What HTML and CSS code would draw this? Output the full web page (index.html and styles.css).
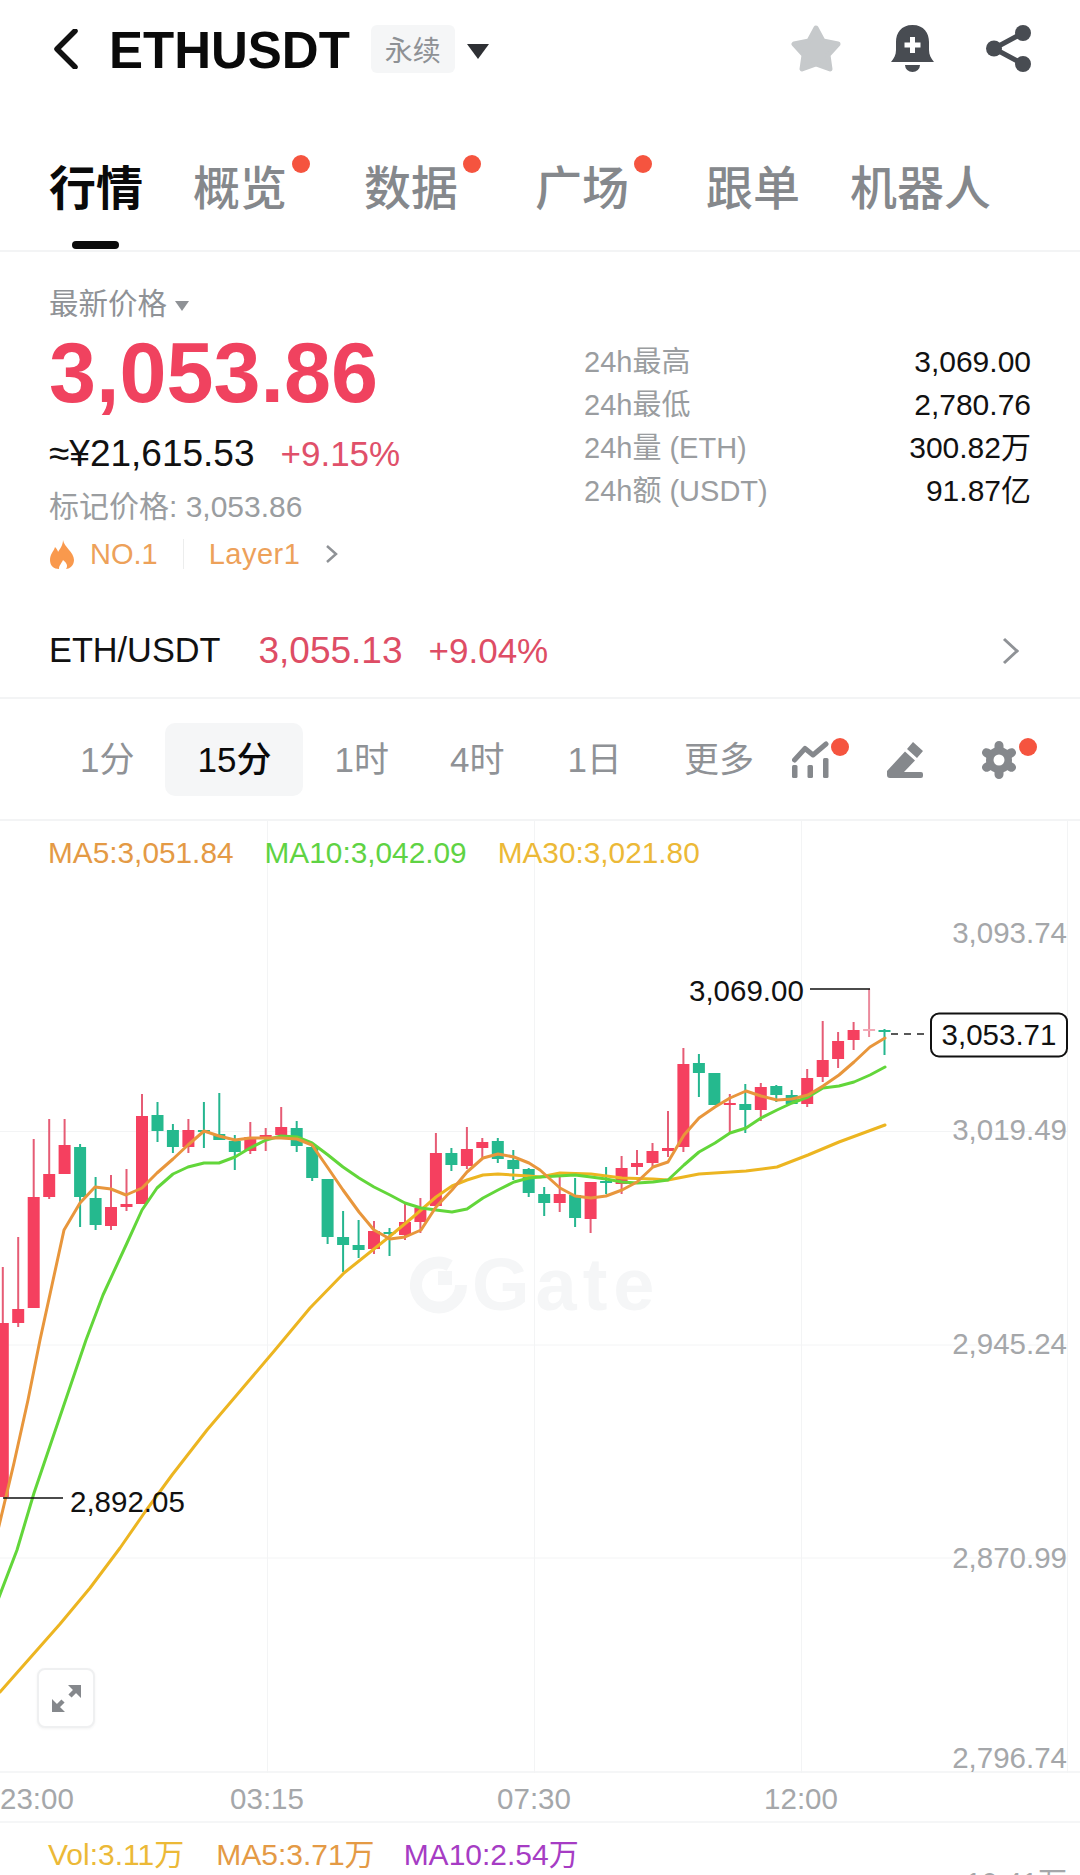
FILE: index.html
```html
<!DOCTYPE html>
<html lang="zh-CN">
<head>
<meta charset="utf-8">
<title>ETHUSDT</title>
<link rel="stylesheet" href="styles.css">
</head>
<body>
<div class="page">
  <header class="topbar">
    <svg class="back" viewBox="0 0 24 40"><polyline points="21,2 3,20 21,38"/></svg>
    <h1 class="symbol">ETHUSDT</h1>
    <span class="badge">永续</span>
    <span class="caret"></span>
    <div class="actions">
      <svg class="ic-star" viewBox="0 0 50 47"><path d="M25 3 32 16 47 19 37 30 39 44 25 39 11 44 13 30 3 19 18 16Z"/></svg>
      <svg class="ic-bell" viewBox="0 0 43 47">
        <path class="fill" d="M21.5 0C10 0 5 8 5 17V25C5 30 3 33 0 37H43C40 33 38 30 38 25V17C38 8 33 0 21.5 0Z"/>
        <path class="fill" d="M14 40H29A7.5 7 0 0 1 14 40Z"/>
        <path class="plus" d="M19 12h5v5.500h5.500v5h-5.500v5.500h-5v-5.500h-5.500v-5h5.500z"/>
      </svg>
      <svg class="ic-share" viewBox="0 0 45 47">
        <path class="link" d="M37 8 8 23.500 37 39"/>
        <circle cx="37" cy="8" r="8"/><circle cx="8" cy="23.500" r="8"/><circle cx="37" cy="39" r="8"/>
      </svg>
    </div>
  </header>

  <nav class="tabs">
    <a class="tab active">行情</a>
    <a class="tab dotted">概览<i class="dot"></i></a>
    <a class="tab dotted">数据<i class="dot"></i></a>
    <a class="tab dotted">广场<i class="dot"></i></a>
    <a class="tab">跟单</a>
    <a class="tab">机器人</a>
  </nav>

  <section class="stats">
    <div class="stats-left">
      <div class="latest">最新价格<span class="mini-caret"></span></div>
      <div class="price">3,053.86</div>
      <div class="fiat"><span class="cny">≈¥21,615.53</span><span class="chg">+9.15%</span></div>
      <div class="mark">标记价格: 3,053.86</div>
      <div class="tags">
        <svg class="flame" viewBox="0 0 24 29"><path d="M13 0C14 7 24 12 24 20 24 26 19 29 16 29 18 26 17 23 13 20 12 23 9 25 9 29 4 29 0 26 0 20 0 14 4 11 5 7 7 9 8 11 8 12 10 9 13 5 13 0Z"/></svg>
        <span class="tag">NO.1</span>
        <span class="tag-sep"></span>
        <span class="tag tag-wide">Layer1</span>
        <svg class="tag-chev" viewBox="0 0 13 20"><polyline points="2,2 11,10 2,18"/></svg>
      </div>
    </div>
    <dl class="stats-right">
      <div class="row"><dt>24h最高</dt><dd>3,069.00</dd></div>
      <div class="row"><dt>24h最低</dt><dd>2,780.76</dd></div>
      <div class="row"><dt>24h量 (ETH)</dt><dd>300.82万</dd></div>
      <div class="row"><dt>24h额 (USDT)</dt><dd>91.87亿</dd></div>
    </dl>
  </section>

  <section class="pair">
    <span class="pair-name">ETH/USDT</span>
    <span class="pair-price">3,055.13</span>
    <span class="pair-chg">+9.04%</span>
    <svg class="pair-chev" viewBox="0 0 17 28"><polyline points="2,2 15,14 2,26"/></svg>
  </section>

  <section class="intervals">
    <span class="iv">1分</span>
    <span class="iv on">15分</span>
    <span class="iv">1时</span>
    <span class="iv">4时</span>
    <span class="iv">1日</span>
    <span class="iv">更多</span>
    <span class="tool">
      <svg class="ic-ind" viewBox="0 0 37 37">
        <path class="ind-line" d="M2.500 19 13 7.500 21 14 34 3"/>
        <rect x="0" y="24" width="5.500" height="13" rx="1.500"/><rect x="15.500" y="24" width="5.500" height="13" rx="1.500"/><rect x="31" y="17" width="5.500" height="20" rx="1.500"/>
      </svg>
      <i class="dot tool-dot"></i>
    </span>
    <span class="tool">
      <svg class="ic-pen" viewBox="0 0 36 36"><path d="M26 0 36 9 30 16 20 7ZM18 9.500 28 18.500 17 30H34Q36 30 36 32V34Q36 36 34 36H3Q0 36 0 33V29Z"/></svg>
    </span>
    <span class="tool">
      <svg class="ic-gear" viewBox="0 0 36 38">
        <g class="gear-arms"><path d="M18 19V4.500M18 19V33.500M18 19 30.500 11.700M18 19 5.500 26.300M18 19 30.500 26.300M18 19 5.500 11.700"/></g>
        <circle cx="18" cy="19" r="13"/>
        <circle class="gear-hole" cx="18" cy="19" r="5.500"/>
      </svg>
      <i class="dot tool-dot"></i>
    </span>
  </section>

  <section class="chart">
    <svg class="plot" viewBox="0 821 1080 952">
      <path class="grid" d="M267.500 821V1773M534.500 821V1773M801.500 821V1773M1067.500 821V1773M0 1131.500H1067M0 1345H1067M0 1558H1067"/>
      <g class="mark-logo">
        <path class="logo-ring" d="M449.700 1265.500A22.500 22.500 0 1 0 461 1285"/>
        <rect x="438" y="1271" width="14" height="14"/>
        <text class="logo-text" x="472" y="1310">Gate</text>
      </g>
      <path class="wick red" d="M2.800 1267V1497M18.200 1237V1327M33.700 1139V1308M49.200 1119V1199M64.600 1119V1174M111 1175V1230M126.500 1169V1211M142 1094V1204M188.400 1119V1153M250.300 1122V1154M265.700 1128V1151M281.200 1107V1135M374 1221V1254M405 1204V1240M420.400 1198V1233M435.900 1133V1206M466.900 1127V1169M482.300 1138V1159M559.700 1177V1212M590.600 1182V1233M621.600 1156V1194M637 1150V1175M652.500 1143V1167M668 1111V1157M683.400 1048V1152M729.800 1094V1133M760.800 1083V1121M807.200 1069V1107M822.700 1021V1082M838.100 1032V1068M853.600 1022V1050"/>
      <path class="body red-fill" d="M-3.200 1323h12V1497h-12zM12.200 1309h12V1323h-12zM27.700 1197h12V1308h-12zM43.200 1174h12V1197h-12zM58.600 1145h12V1174h-12zM105 1207h12V1226h-12zM120.500 1204h12V1207h-12zM136 1116h12V1204h-12zM182.400 1130h12V1147h-12zM244.300 1137h12V1151h-12zM259.700 1135h12V1137h-12zM275.200 1127h12V1135h-12zM368 1231h12V1249h-12zM399 1222h12V1235h-12zM414.400 1208h12V1222h-12zM429.900 1153h12V1206h-12zM460.900 1149h12V1166h-12zM476.300 1142h12V1148h-12zM553.700 1194h12V1203h-12zM584.600 1182h12V1219h-12zM615.600 1168h12V1184h-12zM631 1163h12V1167h-12zM646.500 1151h12V1163h-12zM662 1148h12V1151h-12zM677.400 1064h12V1147h-12zM723.800 1103h12V1105h-12zM754.800 1087h12V1110h-12zM801.200 1078h12V1104h-12zM816.700 1060h12V1077h-12zM832.100 1041h12V1059h-12zM847.600 1030h12V1040h-12z"/>
      <path class="wick green" d="M80.100 1144V1227M95.600 1177V1230M157.500 1102V1142M172.900 1124V1153M203.900 1102V1148M219.300 1093V1140M234.800 1135V1170M296.700 1121V1152M312.200 1146V1181M327.600 1179V1244M343.100 1211V1272M358.600 1220V1258M389.500 1228V1256M451.400 1148V1171M497.800 1138V1163M513.300 1150V1180M528.700 1168V1197M544.200 1187V1216M575.100 1178V1227M606.100 1167V1194M698.900 1054V1097M714.400 1073V1105M745.300 1084V1133M776.300 1085V1102M791.700 1090V1104M884.500 1029V1055"/>
      <path class="body green-fill" d="M74.100 1147h12V1197h-12zM89.600 1198h12V1225h-12zM151.500 1115h12V1131h-12zM166.900 1130h12V1147h-12zM197.900 1130h12V1132h-12zM213.300 1134h12V1140h-12zM228.800 1141h12V1152h-12zM290.700 1128h12V1146h-12zM306.200 1147h12V1178h-12zM321.600 1179h12V1237h-12zM337.100 1237h12V1245h-12zM352.600 1245h12V1250h-12zM383.500 1232h12V1234h-12zM445.400 1153h12V1165h-12zM491.800 1141h12V1159h-12zM507.300 1160h12V1169h-12zM522.700 1169h12V1193h-12zM538.200 1194h12V1203h-12zM569.100 1195h12V1218h-12zM600.100 1181h12V1183h-12zM692.900 1063h12V1073h-12zM708.400 1073h12V1105h-12zM739.300 1104h12V1110h-12zM770.300 1086h12V1095h-12zM785.700 1095h12V1104h-12zM878.500 1030h12V1032h-12z"/>
      <path class="wick pale" d="M869.100 989V1037"/>
      <path class="body pale-fill" d="M863.100 1029h12V1031h-12z"/>
      <polyline class="ma ma30" points="0,1692 15,1675 30,1658 45,1641 60,1624 75,1606 90,1588 105,1568 120,1548 145,1512 172,1475 207,1430 241,1390 275,1350 310,1308 344,1273 389,1237 413,1217 436,1197 452,1186 467,1180 483,1175 498,1174 529,1176 540,1177 560,1173 591,1174 622,1178 653,1179 668,1180 699,1174 746,1171 777,1167 808,1155 839,1142 885,1125"/>
      <polyline class="ma ma10" points="-4,1605 17,1550 34,1493 52,1440 69,1390 86,1340 103,1295 127,1243 142,1210 157,1188 173,1174 188,1167 204,1163 219,1163 235,1157 250,1148 266,1140 281,1136 297,1137 312,1143 328,1155 343,1167 359,1178 374,1187 390,1195 405,1203 421,1208 436,1210 452,1212 467,1209 483,1198 498,1190 514,1182 529,1178 540,1177 575,1175 591,1177 606,1179 622,1182 637,1183 653,1182 668,1180 684,1165 699,1152 715,1143 730,1133 746,1128 761,1118 777,1110 792,1103 808,1097 823,1088 839,1086 854,1082 870,1075 885,1067"/>
      <polyline class="ma ma5" points="-2,1530 14,1463 28,1400 40,1340 52,1285 64,1230 80,1203 95,1187 111,1189 126,1195 142,1188 157,1173 173,1159 188,1145 204,1131 219,1136 235,1140 250,1138 266,1138 281,1138 297,1139 312,1145 328,1168 343,1190 359,1212 374,1230 390,1239 405,1237 421,1230 436,1207 452,1190 467,1172 483,1158 498,1154 514,1157 529,1163 540,1170 560,1188 575,1196 591,1198 606,1196 622,1190 637,1182 653,1167 668,1162 684,1135 699,1118 715,1107 730,1098 746,1091 761,1096 777,1100 792,1099 808,1095 823,1086 839,1075 854,1062 870,1047 885,1038"/>
      <path class="note-line" d="M810 989H870M3 1498H63"/>
      <path class="note-dash" d="M891 1034H930"/>
      <rect class="note-box" x="931" y="1013.500" width="136" height="43" rx="8"/>
      <text class="note" x="689" y="1001">3,069.00</text>
      <text class="note" x="70" y="1512">2,892.05</text>
      <text class="note mid" x="999" y="1045">3,053.71</text>
      <text class="axis" x="1067" y="943">3,093.74</text>
      <text class="axis" x="1067" y="1140">3,019.49</text>
      <text class="axis" x="1067" y="1354">2,945.24</text>
      <text class="axis" x="1067" y="1568">2,870.99</text>
      <text class="axis" x="1067" y="1768">2,796.74</text>
    </svg>
    <div class="legend">
      <span class="c-ma5">MA5:3,051.84</span>
      <span class="c-ma10">MA10:3,042.09</span>
      <span class="c-ma30">MA30:3,021.80</span>
    </div>
    <button class="expand" aria-label="全屏">
      <svg viewBox="0 0 29 27"><path class="fill" d="M16 0H29V13ZM0 14 13 27H0Z"/><path class="shaft" d="M23 6 18 11M6 21 11 16"/></svg>
    </button>
  </section>

  <div class="xaxis">
    <span>23:00</span><span>03:15</span><span>07:30</span><span>12:00</span>
  </div>

  <section class="volume">
    <span class="c-vol">Vol:3.11万</span>
    <span class="c-ma5">MA5:3.71万</span>
    <span class="c-ma10v">MA10:2.54万</span>
    <span class="vol-axis">10.41万</span>
  </section>
</div>
</body>
</html>
```

FILE: styles.css
```css
* { box-sizing: border-box; }
html, body { margin: 0; padding: 0; background: #fff; }
body { font-family: "Liberation Sans", "Noto Sans CJK SC", sans-serif; color: #111; }
.page { position: relative; width: 1080px; height: 1875px; overflow: hidden; display: flex; flex-direction: column; }
svg { display: block; }

/* top bar */
.topbar { height: 96px; flex: none; display: flex; align-items: center; padding: 0 49px 0 54px; }
.back { width: 24px; height: 40px; flex: none; margin: 2px 31px 0 0; }
.back polyline { fill: none; stroke: #111; stroke-width: 5.500; stroke-linecap: round; stroke-linejoin: round; }
.symbol { margin: 5px 21px 0 0; font-size: 51px; font-weight: 700; line-height: 60px; color: #0a0a0a; }
.badge { width: 84px; height: 48px; flex: none; margin-top: 2px; display: flex; align-items: center; justify-content: center; background: #f5f6f7; border-radius: 6px; font-size: 28px; color: #8e9195; }
.caret { width: 0; height: 0; flex: none; margin: 6px 0 0 12px; border-style: solid; border-width: 15px 11.500px 0; border-color: #2e3034 transparent transparent; }
.actions { margin-left: auto; display: flex; align-items: center; }
.ic-star { width: 50px; height: 47px; margin-right: 50px; }
.ic-star path { fill: #c6c9cb; stroke: #c6c9cb; stroke-width: 5; stroke-linejoin: round; }
.ic-bell { width: 43px; height: 47px; margin-right: 52px; }
.ic-bell .fill { fill: #484c52; }
.ic-bell .plus { fill: #fff; }
.ic-share { width: 45px; height: 47px; fill: #484c52; }
.ic-share .link { fill: none; stroke: #484c52; stroke-width: 5; }

/* tabs */
.tabs { height: 156px; flex: none; display: flex; align-items: flex-start; padding: 65px 0 0 49px; border-bottom: 2px solid #f3f4f5; }
.tab { position: relative; margin-right: 50px; font-size: 47px; line-height: 56px; font-weight: 500; color: #85888c; }
.tab.dotted { margin-right: 77px; }
.tab.active { color: #0a0a0a; font-weight: 700; }
.tab.active::after { content: ""; position: absolute; left: 23px; top: 80px; width: 47px; height: 8px; border-radius: 4px; background: #0a0a0a; }
.dot { display: block; position: absolute; width: 18px; height: 18px; border-radius: 50%; background: #f5543f; }
.tab .dot { right: -23px; top: -6px; }

/* stats */
.stats { flex: none; display: flex; align-items: flex-start; padding: 31px 49px 0 49px; height: 328px; }
.stats-left { width: 535px; flex: none; }
.latest { display: flex; align-items: center; font-size: 29.500px; line-height: 42px; color: #8f9296; }
.mini-caret { margin: 3px 0 0 8px; width: 0; height: 0; border-style: solid; border-width: 10px 7.500px 0; border-color: #8f9296 transparent transparent; }
.price { font-size: 84.500px; font-weight: 700; line-height: 97px; color: #f0425f; }
.fiat { display: flex; align-items: center; height: 64px; }
.cny { font-size: 37px; color: #111; margin-right: 26px; }
.chg { font-size: 35px; color: #e0506a; }
.mark { font-size: 30px; line-height: 41px; color: #9a9da0; }
.tags { display: flex; align-items: center; height: 54px; font-size: 29px; color: #eda15a; padding-left: 1px; }
.flame { width: 24px; height: 29px; margin-right: 16px; fill: #f9994d; }
.tag-sep { width: 1px; height: 30px; margin: 0 25px 0 25px; background: #eceded; }
.tag-wide { letter-spacing: 0.500px; }
.tag-chev { width: 13px; height: 20px; margin-left: 25px; }
.tag-chev polyline { fill: none; stroke: #8f9296; stroke-width: 2.500; }
.stats-right { margin: 57px 0 0; flex: 1; }
.row { display: flex; justify-content: space-between; align-items: baseline; height: 43px; font-size: 29px; line-height: 43px; }
.row dt { color: #9a9da0; height: 43px; }
.row dd { margin: 0; color: #111; font-size: 30px; height: 43px; }

/* pair */
.pair { height: 119px; flex: none; display: flex; align-items: center; padding: 24px 61px 0 49px; border-bottom: 2px solid #f3f4f5; }
.pair-name { font-size: 34.300px; color: #111; margin-right: 38px; }
.pair-price { font-size: 37px; color: #de4d65; margin-right: 26px; }
.pair-chg { font-size: 35px; color: #de4d65; }
.pair-chev { width: 17px; height: 28px; margin-left: auto; }
.pair-chev polyline { fill: none; stroke: #8f9296; stroke-width: 3; }

/* intervals */
.intervals { height: 122px; flex: none; display: flex; align-items: center; padding-left: 80px; padding-top: 1px; border-bottom: 2px solid #f3f4f5; }
.iv { flex: none; font-size: 35px; height: 73px; line-height: 73px; color: #8f9296; white-space: nowrap; }
.iv.on { width: 138px; text-align: center; color: #0a0a0a; font-weight: 500; background: #f5f6f7; border-radius: 10px; }
.iv:nth-child(1) { margin-right: 31px; }
.iv:nth-child(2) { margin-right: 31px; }
.iv:nth-child(3) { margin-right: 61px; }
.iv:nth-child(4) { margin-right: 63px; }
.iv:nth-child(5) { margin-right: 62px; }
.iv:nth-child(6) { margin-right: 38px; }
.tool { position: relative; display: block; flex: none; margin-right: 58px; }
.tool:last-child { margin-right: 0; }
.tool .tool-dot { right: -20px; top: -3px; }
.ic-ind { width: 37px; height: 37px; fill: #85888c; }
.ind-line { fill: none; stroke: #85888c; stroke-width: 5; stroke-linecap: round; stroke-linejoin: round; }
.ic-pen { width: 36px; height: 36px; fill: #85888c; }
.ic-gear { width: 36px; height: 38px; fill: #85888c; }
.gear-arms path { fill: none; stroke: #85888c; stroke-width: 9; stroke-linecap: round; }
.gear-hole { fill: #fff; }

/* chart */
.chart { position: relative; height: 952px; flex: none; border-bottom: 2px solid #f5f6f7; }
.plot { width: 1080px; height: 952px; overflow: visible; }
.grid { fill: none; stroke: #f3f4f5; stroke-width: 1; }
.mark-logo { fill: #f5f6f7; }
.logo-ring { fill: none; stroke: #f5f6f7; stroke-width: 12; }
.logo-text { font-size: 74px; font-weight: 700; letter-spacing: 6px; }
.wick { fill: none; stroke-width: 2; }
.red { stroke: #e65c75; }
.green { stroke: #25b68f; }
.pale { stroke: #eb8a9c; }
.red-fill { fill: #f5405f; }
.green-fill { fill: #25b98e; }
.pale-fill { fill: #f2a9b6; }
.ma { fill: none; stroke-width: 3; stroke-linejoin: round; stroke-linecap: round; }
.ma5 { stroke: #e8963c; }
.ma10 { stroke: #62d63a; }
.ma30 { stroke: #ecb521; }
.note-line { fill: none; stroke: #111; stroke-width: 1.500; }
.note-dash { fill: none; stroke: #222; stroke-width: 1.500; stroke-dasharray: 7 6; }
.note-box { fill: #fff; stroke: #111; stroke-width: 2; }
.note { font-size: 29.500px; fill: #111; }
.note.mid { text-anchor: middle; }
.axis { font-size: 29.500px; fill: #a5a7aa; text-anchor: end; }
.legend { position: absolute; left: 48px; top: 15px; display: flex; font-size: 29.800px; line-height: 34px; }
.legend span { margin-right: 31px; }
.c-ma5 { color: #e49a45; }
.c-ma10 { color: #5fd344; }
.c-ma30 { color: #ecb937; }
.c-vol { color: #ecb937; }
.c-ma10v { color: #a63cc4; }
.expand { position: absolute; left: 37px; top: 847px; width: 58px; height: 60px; padding: 0; display: flex; align-items: center; justify-content: center; background: #fff; border: 2px solid #eff0f1; border-radius: 8px; box-shadow: 0 1px 3px rgba(0,0,0,.05); }
.expand svg { width: 29px; height: 27px; }
.expand .fill { fill: #85888c; }
.expand .shaft { fill: none; stroke: #85888c; stroke-width: 4.500; }

/* x axis */
.xaxis { height: 50px; flex: none; display: grid; grid-template-columns: 133.500px repeat(3, 267px); align-items: center; padding-top: 4px; font-size: 29.500px; color: #a5a7aa; border-bottom: 2px solid #f5f6f7; }
.xaxis span { text-align: center; }
.xaxis span:first-child { text-align: left; }

/* volume */
.volume { position: relative; flex: 1; display: flex; padding: 15px 0 0 48px; font-size: 30px; line-height: 34px; }
.volume span { margin-right: 32px; white-space: nowrap; }
.volume .c-ma5 { margin-right: 29px; }
.volume .vol-axis { position: absolute; right: 13px; top: 43px; margin: 0; color: #a5a7aa; font-size: 29px; }
```
